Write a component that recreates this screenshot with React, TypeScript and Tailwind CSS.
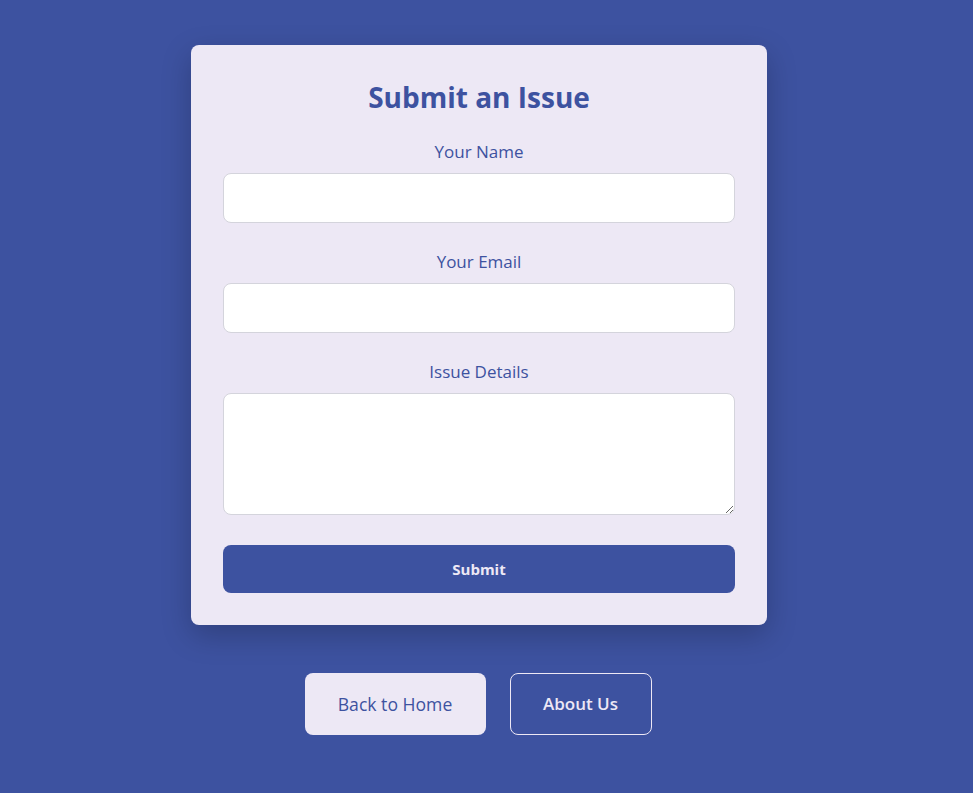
const font = { fontFamily: '"Open Sans", "Noto Sans", sans-serif' };

const Label = ({ children }: { children: string }) => (
  <label className="mb-[9px] block text-center text-[17px] leading-6 text-[#3d52a0]">{children}</label>
);

export default function App() {
  return (
    <div className="min-h-screen bg-[#3d52a0]" style={font}>
      <div className="flex w-[958px] flex-col items-center pt-[45px]">
        <div className="w-[576px] rounded-lg bg-[#ede8f5] px-8 pb-8 pt-8 shadow-[0_10px_30px_rgba(0,0,0,0.22)]">
          <h1 className="mb-[23px] text-center text-[28px] font-bold leading-10 text-[#3d52a0]">Submit an Issue</h1>
          <form onSubmit={(e) => e.preventDefault()}>
            <div className="mb-[27px]">
              <Label>Your Name</Label>
              <input
                type="text"
                className="block h-[50px] w-full rounded-lg border border-[#d4d4dc] bg-white px-3 text-base outline-none"
              />
            </div>
            <div className="mb-[27px]">
              <Label>Your Email</Label>
              <input
                type="email"
                className="block h-[50px] w-full rounded-lg border border-[#d4d4dc] bg-white px-3 text-base outline-none"
              />
            </div>
            <div className="mb-[30px]">
              <Label>Issue Details</Label>
              <textarea className="block h-[122px] w-full resize-y rounded-lg border border-[#d4d4dc] bg-white px-3 py-2 text-base outline-none" />
            </div>
            <button
              type="submit"
              className="block h-12 w-full rounded-lg bg-[#3d52a0] text-[15px] font-bold text-[#ede8f5]"
            >
              Submit
            </button>
          </form>
        </div>
        <div className="mt-12 flex gap-6 pr-[2px]">
          <button className="h-[62px] w-[181px] rounded-lg bg-[#ede8f5] text-[17.6px] text-[#3d52a0]">
            Back to Home
          </button>
          <button className="h-[62px] w-[142px] rounded-lg border border-[#ede8f5] text-[17px] font-semibold text-[#ede8f5]">
            About Us
          </button>
        </div>
      </div>
    </div>
  );
}
